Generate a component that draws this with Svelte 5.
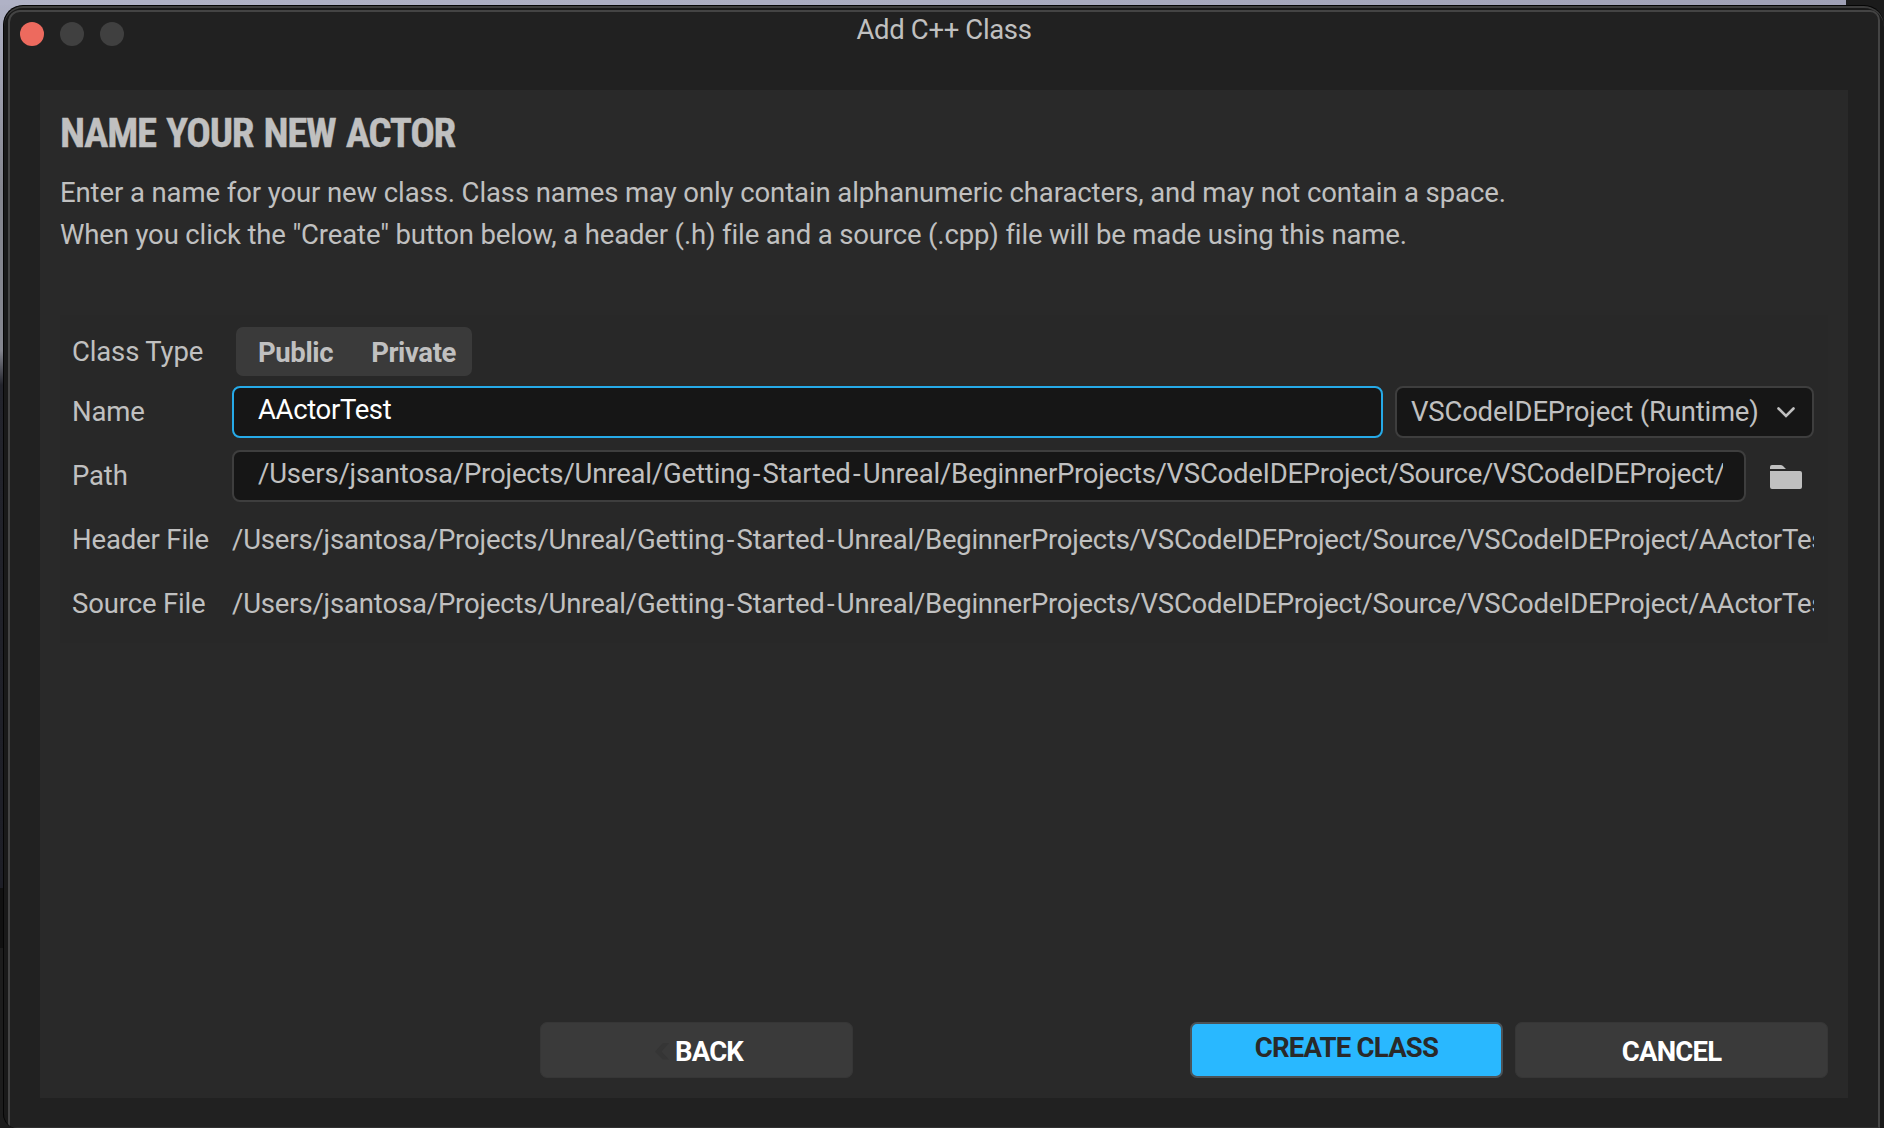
<script>
  const base = '/Users/jsantosa/Projects/Unreal/';
  const repo = ['Getting', 'Started', 'Unreal'];
  const rest = '/BeginnerProjects/VSCodeIDEProject/Source/VSCodeIDEProject/';
  const className = 'AActorTest';
</script>

{#snippet dir()}{base}{#each repo as word, i}{#if i}<span class="dash">-</span>{/if}{word}{/each}<span class="tight">{rest}</span>{/snippet}

<div class="desktop">
  <div class="window">
    <div class="frame">
      <header class="titlebar">
        <div class="lights">
          <span class="light close"></span>
          <span class="light"></span>
          <span class="light"></span>
        </div>
        <div class="title">Add C++ Class</div>
      </header>

      <main class="panel">
        <h1>NAME YOUR NEW ACTOR</h1>
        <p class="l1">Enter a name for your new class. Class names may only contain alphanumeric characters, and may not contain a space.</p>
        <p class="l2">When you click the "Create" button below, a header (.h) file and a source (.cpp) file will be made using this name.</p>

        <section class="form">
          <div class="row type">
            <span class="label">Class Type</span>
            <div class="segmented">
              <span>Public</span>
              <span>Private</span>
            </div>
          </div>
          <div class="row">
            <span class="label">Name</span>
            <div class="field focused"><span class="value">{className}</span></div>
            <div class="field combo">
              <span>VSCodeIDEProject (Runtime)</span>
              <svg width="18" height="11" viewBox="0 0 18 11"><path d="M1.5 1.5 9 9l7.5-7.5" fill="none" stroke="#c0c0c0" stroke-width="2.6" stroke-linecap="round" /></svg>
            </div>
          </div>
          <div class="row">
            <span class="label">Path</span>
            <div class="field path"><span class="value">{@render dir()}</span></div>
            <svg class="folder" width="32" height="24" viewBox="0 0 32 24">
              <path fill="#c0c0c0" d="M0 4V2Q0 0 2 0H10.500Q12 0 13 1L16 4ZM0 6H30Q32 6 32 8V22Q32 24 30 24H2Q0 24 0 22Z" />
            </svg>
          </div>
          <div class="row">
            <span class="label">Header File</span>
            <span class="file">{@render dir()}{className}</span>
          </div>
          <div class="row">
            <span class="label">Source File</span>
            <span class="file">{@render dir()}{className}</span>
          </div>
        </section>

        <footer>
          <div class="btn back">
            <svg width="14" height="17" viewBox="0 0 14 17"><path d="M8 0h6L6.500 8.500 14 16.500H8L0 8.500Z" fill="#353535" /></svg>
            <span>BACK</span>
          </div>
          <div class="btn create"><span>CREATE CLASS</span></div>
          <div class="btn cancel"><span>CANCEL</span></div>
        </footer>
      </main>
    </div>
  </div>
</div>

<style>
  :global(body) {
    margin: 0;
    background: #1a1a1a;
  }
  .desktop {
    box-sizing: border-box;
    width: 1884px;
    height: 1128px;
    padding: 5px 0 0 3px;
    overflow: hidden;
    font: 27.5px/34px Roboto, sans-serif;
    color: #c0c0c0;
    background:
      linear-gradient(90deg, #b0b2c6, #aaacc0 50%, #9fa0b5) 0 0 / 1846px 5px no-repeat,
      linear-gradient(#b0b2c6 0, #85868f 190px, #85868f 350px, #23242c 385px, #1d1e26 888px, #111 888px, #111 948px, #1c1c1c 948px) 0 0 / 24px 100% no-repeat,
      #1b1b1b;
  }
  .window {
    box-sizing: border-box;
    width: 1881px;
    height: 1123px;
    overflow: hidden;
    border: 1px solid #050505;
    border-right: 0;
    border-bottom: 0;
    border-radius: 20px 20px 0 14px;
    padding: 4px 4px 0 4px;
    background: #191919;
    box-shadow: inset 0 2px 0 #3c3c3c;
  }
  .frame {
    box-sizing: border-box;
    height: 1118px;
    border: 2px solid #444;
    border-bottom: 1px solid #303030;
    border-radius: 12px 10px 0 0;
    background: #212121;
    padding: 0 30px;
  }
  .titlebar {
    position: relative;
    height: 78px;
    display: flex;
    justify-content: center;
  }
  .lights {
    position: absolute;
    left: -20px;
    top: 10px;
    display: flex;
    gap: 16px;
  }
  .light {
    width: 24px;
    height: 24px;
    border-radius: 50%;
    background: #404040;
  }
  .light.close {
    background: #ed6a5e;
  }
  .title {
    padding-top: 1px;
    letter-spacing: -0.35px;
  }
  .panel {
    box-sizing: border-box;
    height: 1008px;
    background: #292929;
    padding: 19px 20px 20px;
    display: flex;
    flex-direction: column;
  }
  h1 {
    margin: 0;
    font-size: 41px;
    line-height: 48px;
    font-weight: 700;
    white-space: nowrap;
    font-stretch: condensed;
    letter-spacing: -1.35px;
    word-spacing: 2.2px;
    -webkit-text-stroke: 0.3px #c0c0c0;
  }
  p {
    margin: 0;
    height: 42px;
    line-height: 42px;
    white-space: nowrap;
  }
  .l1 {
    margin-top: 15px;
    letter-spacing: -0.1px;
  }
  .l2 {
    letter-spacing: -0.14px;
  }
  .form {
    box-sizing: border-box;
    margin-top: 59px;
    padding: 12px 14px 0 12px;
    height: 328px;
    background: #282828;
  }
  .row {
    display: flex;
    align-items: center;
    height: 52px;
    margin-bottom: 12px;
  }
  .type {
    height: 49px;
    margin-bottom: 10px;
  }
  .label {
    flex: none;
    width: 160px;
    letter-spacing: -0.15px;
    white-space: nowrap;
  }
  .segmented {
    box-sizing: border-box;
    width: 236px;
    height: 49px;
    margin-left: 4px;
    padding: 2px 16px 0 22px;
    border-radius: 7px;
    background: #3a3a3a;
    display: flex;
    justify-content: space-between;
    align-items: center;
    font-weight: 700;
    letter-spacing: -0.4px;
  }
  .field {
    box-sizing: border-box;
    flex: none;
    height: 52px;
    border: 2px solid #3e3e3e;
    border-radius: 8px;
    background: #161616;
    white-space: nowrap;
  }
  .focused {
    width: 1151px;
    border-color: #26aae8;
    color: #fff;
    letter-spacing: -0.35px;
  }
  .value {
    display: block;
    margin: 5px 21px 0 24px;
    overflow: hidden;
  }
  .combo {
    width: 419px;
    margin-left: 12px;
    padding: 0 17px 0 14px;
    display: flex;
    align-items: center;
    justify-content: space-between;
    letter-spacing: -0.2px;
  }
  .path {
    width: 1514px;
    letter-spacing: -0.17px;
  }
  .folder {
    margin: 2px 0 0 24px;
  }
  .file {
    width: 1582px;
    flex: none;
    overflow: hidden;
    letter-spacing: -0.17px;
    white-space: nowrap;
  }
  .dash {
    padding: 0 2.3px;
  }
  .tight {
    letter-spacing: -0.28px;
  }
  footer {
    margin-top: auto;
    display: flex;
    padding-left: 480px;
  }
  .btn {
    box-sizing: border-box;
    flex: none;
    width: 313px;
    height: 56px;
    border: 1px solid #363636;
    border-radius: 7px;
    background: #3a3a3a;
    color: #fff;
    font-weight: 700;
    letter-spacing: -0.78px;
    padding-top: 3px;
    display: flex;
    align-items: center;
    justify-content: center;
  }
  .back {
    padding-left: 5px;
  }
  .back svg {
    margin-right: 6px;
  }
  .create {
    margin-left: 337px;
    border: 2px solid #4b5358;
    background: #29b8ff;
    color: #292929;
    padding: 0 0 5px;
  }
  .cancel {
    margin-left: 12px;
  }
</style>
